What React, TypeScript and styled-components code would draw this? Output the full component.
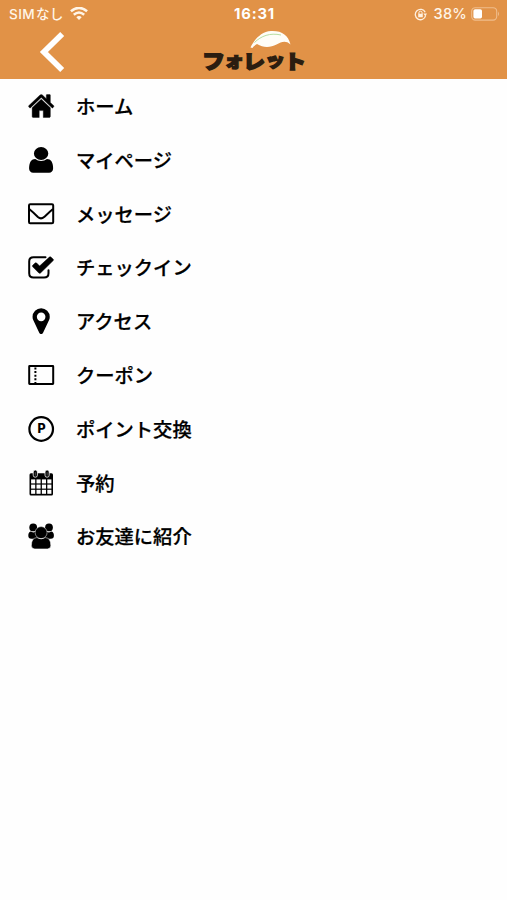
import React from "react";
import styled, { createGlobalStyle } from "styled-components";

const GlobalStyle = createGlobalStyle`
  * { box-sizing: border-box; }
  body { margin: 0; background: #fefefe; }
`;

const Screen = styled.div`
  width: 507px;
  height: 900px;
  overflow: hidden;
  display: flex;
  flex-direction: column;
  background: #fefefe;
  color: #000;
  font-family: "Noto Sans CJK JP", sans-serif;
`;

const Header = styled.header`
  height: 79px;
  flex: none;
  background: #e19247;
`;

const StatusBar = styled.div`
  height: 28px;
  padding: 0 7px 0 9px;
  display: grid;
  grid-template-columns: 1fr auto 1fr;
  align-items: center;
  color: #fff5e8;
  font-family: Inter, "Noto Sans CJK JP", sans-serif;
  font-size: 14px;
  line-height: 28px;
`;

const Carrier = styled.div`
  display: flex;
  align-items: center;
  gap: 7px;
  font-size: 13.6px;
  font-weight: 500;
  letter-spacing: 0.4px;
  white-space: nowrap;
`;

const Kana = styled.span`
  font-size: 13.6px;
  letter-spacing: 0;
  margin-left: 1px;
`;

const Clock = styled.div`
  font-weight: 700;
  font-size: 14.8px;
  letter-spacing: 0.85px;
  color: #fff;
`;

const Power = styled.div`
  display: flex;
  justify-content: flex-end;
  align-items: center;
  font-weight: 500;
  font-size: 14.6px;
`;

const Percent = styled.span`
  margin: 0 4px 0 7px;
  letter-spacing: 0.2px;
`;

const NavBar = styled.div`
  height: 51px;
  display: grid;
  grid-template-columns: 1fr auto 1fr;
  padding: 0 38px;
`;

const BackButton = styled.button`
  justify-self: start;
  width: 30px;
  height: 48px;
  padding: 0;
  border: 0;
  background: none;
`;

const Logo = styled.div`
  width: 106px;
  height: 51px;
  display: flex;
  flex-direction: column;
  align-items: center;
  color: #2b1d10;
`;

const Leaf = styled.svg`
  width: 44px;
  height: 20px;
  flex: none;
  margin: 1px 0 0 35px;
`;

const LogoText = styled.div`
  display: flex;
  height: 22px;
  align-items: center;
  line-height: 22px;
  font-weight: 900;
  transform: scaleY(0.9);
`;

const LogoKana = styled.span<{ $size: number; $width: number }>`
  width: ${(p) => p.$width}px;
  display: flex;
  justify-content: center;
  font-size: ${(p) => p.$size}px;
  -webkit-text-stroke: 1.5px #2b1d10;
`;

const Menu = styled.nav`
  display: flex;
  flex-direction: column;
  padding-top: 0.3px;
`;

const MenuRow = styled.a`
  height: 53.77px;
  display: flex;
  align-items: center;
  gap: 21px;
  padding-left: 27px;
  font-size: 19.3px;
  font-weight: 500;
  line-height: 28px;
  -webkit-text-stroke: 0.25px #000;
`;

const Icon = styled.svg`
  width: 28px;
  height: 28px;
  flex: none;
  fill: #000;
  overflow: visible;
`;

const HomeIcon = () => (
  <Icon viewBox="0 0 28 28">
    <path
      transform="translate(1.1 -2) scale(.0158 .0179)"
      stroke="#000"
      strokeWidth="22"
      d="M1408 992v480q0 26-19 45t-45 19H960v-384H704v384H320q-26 0-45-19t-19-45V992q0-1 .5-3t.5-3l575-474 575 474q1 2 1 6zm223-69l-62 74q-8 9-21 11h-3q-13 0-21-7L832 424 140 1001q-12 8-24 7-13-2-21-11l-62-74q-8-10-7-23.5t11-21.5l719-599q32-26 76-26t76 26l244 204V288q0-14 9-23t23-9h192q14 0 23 9t9 23v408l219 182q10 8 11 21.5t-7 23.5z"
    />
  </Icon>
);

const UserIcon = () => (
  <Icon viewBox="0 0 28 28">
    <path
      transform="translate(-2.7 -1.1) scale(.01875 .0168)"
      d="M1536 1399q0 109-62.500 187t-150.500 78h-854q-88 0-150.500-78t-62.500-187q0-85 8.500-160.500t31.500-152 58.500-131 94-89 134.500-34.500q131 128 313 128t313-128q76 0 134.500 34.500t94 89 58.500 131 31.500 152 8.500 160.500zm-256-887q0 159-112.500 271.500t-271.500 112.500-271.500-112.500-112.500-271.500 112.500-271.500 271.500-112.500 271.500 112.500 112.500 271.500z"
    />
  </Icon>
);

const MailIcon = () => (
  <Icon viewBox="0 0 28 28">
    <g fill="none" stroke="#000" strokeWidth="2" strokeLinejoin="round">
      <rect x="2" y="4.200" width="24.200" height="19" rx="1.200" />
      <path d="M2.200 9c3.200 2.600 6.300 5.600 8.700 8q3.100 2.800 6.200 0c2.600-2.400 5.700-5.400 8.900-8" />
    </g>
  </Icon>
);

const CheckIcon = () => (
  <Icon viewBox="0 0 28 28">
    <path
      d="M18.500 4.300H6.500Q2.200 4.300 2.200 8.400V20.200q0 4.300 4.300 4.300H17q4.500 0 4.500-4.300v-3"
      fill="none"
      stroke="#000"
      strokeWidth="2"
      strokeLinecap="round"
    />
    <path d="M5.700 12.300l2.400-2.300q.8-.6 1.500 0l3 3L22.400 4.100q.8-.7 1.500 0l2.300 2.100q.7.700 0 1.400L13.500 20q-.8.700-1.600 0L5.700 13.800q-.7-.7 0-1.500z" stroke="#000" strokeWidth=".5" />
  </Icon>
);

const PinIcon = () => (
  <Icon viewBox="0 0 28 28">
    <path
      transform="translate(-.9 -.9) scale(.0168)"
      d="M1152 640q0-106-75-181t-181-75-181 75-75 181 75 181 181 75 181-75 75-181zm256 0q0 109-33 179l-364 774q-16 33-47.500 52t-67.500 19-67.500-19-46.500-52l-365-774q-33-70-33-179 0-212 150-362t362-150 362 150 150 362z"
    />
  </Icon>
);

const CouponIcon = () => (
  <Icon viewBox="0 0 28 28">
    <g fill="none" stroke="#000" strokeWidth="2">
      <rect x="2.200" y="5" width="24" height="18" rx=".4" />
      <path d="M8.400 6.500v15.500" strokeDasharray="2 1.600" />
    </g>
  </Icon>
);

const Letter = styled.text`
  font: 800 12.5px Inter, sans-serif;
`;

const PointIcon = () => (
  <Icon viewBox="0 0 28 28">
    <circle cx="14.200" cy="14" r="11.800" fill="none" stroke="#000" strokeWidth="2.200" />
    <Letter x="14.500" y="18.400" textAnchor="middle">P</Letter>
  </Icon>
);

const CalendarIcon = () => (
  <Icon viewBox="0 0 28 28">
    <path d="M4 4.300h20.500q1.500 0 1.500 1.500V25q0 1.500-1.500 1.500H4Q2.500 26.500 2.500 25V5.800q0-1.500 1.500-1.500z" />
    <g fill="#fefefe">
      {[10.4, 15.6, 20.8].map((y) =>
        [4.1, 9.5, 14.9, 20.3].map((x) => (
          <rect key={`${x}-${y}`} x={x} y={y} width="4.100" height="4" />
        ))
      )}
    </g>
    <g stroke="#fefefe" strokeWidth=".8">
      <rect x="6.200" y="1" width="4.200" height="7.200" rx="2" />
      <rect x="18" y="1" width="4.200" height="7.200" rx="2" />
    </g>
    <path d="M8.300 3.200v3.400M20.100 3.200v3.400" stroke="#888" strokeWidth=".6" />
  </Icon>
);

const UsersIcon = () => (
  <Icon viewBox="0 0 28 28">
    <circle cx="6.200" cy="5.400" r="3.900" />
    <circle cx="22" cy="5.400" r="3.900" />
    <path d="M3.600 9.600q2.800 1.600 5.200 0l2.800 2.400v4.700H4.300q-3-.2-3-3 0-3.400 2.300-4.100zM24.600 9.600q-2.800 1.600-5.200 0l-2.800 2.400v4.700h7.300q3-.2 3-3 0-3.400-2.300-4.100z" />
    <path
      d="M9.800 15.600q4.300 2.600 8.600 0 5.400.4 5.400 8 0 3.300-3.400 3.300H7.800q-3.400 0-3.400-3.300 0-7.600 5.400-8z"
      stroke="#fefefe"
      strokeWidth=".5"
    />
    <circle cx="14.100" cy="10.600" r="6" stroke="#fefefe" strokeWidth=".5" />
  </Icon>
);

const items = [
  { label: "ホーム", Glyph: HomeIcon },
  { label: "マイページ", Glyph: UserIcon },
  { label: "メッセージ", Glyph: MailIcon },
  { label: "チェックイン", Glyph: CheckIcon },
  { label: "アクセス", Glyph: PinIcon },
  { label: "クーポン", Glyph: CouponIcon },
  { label: "ポイント交換", Glyph: PointIcon },
  { label: "予約", Glyph: CalendarIcon },
  { label: "お友達に紹介", Glyph: UsersIcon },
];

const logoKana = [
  { char: "フ", size: 23, width: 23 },
  { char: "ォ", size: 20, width: 18 },
  { char: "レ", size: 22, width: 22 },
  { char: "ッ", size: 20, width: 20 },
  { char: "ト", size: 22, width: 20 },
];

export default function App() {
  return (
    <Screen>
      <GlobalStyle />
      <Header>
        <StatusBar>
          <Carrier>
            <span>
              SIM<Kana>なし</Kana>
            </span>
            <svg width="18" height="14" viewBox="0 0 18 14">
              <g fill="none" stroke="#fff5e8" strokeWidth="2.500">
                <path d="M.9 4.300q8.100-6.800 16.200 0" />
                <path d="M3.800 7.700q5.200-4.400 10.400 0" />
              </g>
              <path d="M6.300 10.200q2.700-2.300 5.400 0L9 12.900z" fill="#fff5e8" />
            </svg>
          </Carrier>
          <Clock>16:31</Clock>
          <Power>
            <svg width="13" height="13" viewBox="0 0 13 13">
              <path
                d="M11.600 7.500A5.200 5.200 0 1 1 11.200 4.300"
                fill="none"
                stroke="#fff0df"
                strokeWidth="1.300"
              />
              <path d="M9.300 5.400h3.700l-1.600 2.900z" fill="#fff0df" />
              <path d="M4.900 6V4.800a1.600 1.600 0 0 1 3.200 0V6" fill="none" stroke="#fff0df" />
              <rect x="4.200" y="5.800" width="4.600" height="3.500" rx=".6" fill="#fff0df" />
            </svg>
            <Percent>38%</Percent>
            <svg width="29" height="14" viewBox="0 0 29 14">
              <rect x=".7" y=".7" width="25" height="12.400" rx="3.600" fill="none" stroke="#efbd8c" strokeWidth="1.100" />
              <rect x="2.400" y="2.300" width="8.600" height="9.200" rx="1.700" fill="#fff" />
              <path d="M27 4.500q2 2.400 0 4.800z" fill="#efbd8c" />
            </svg>
          </Power>
        </StatusBar>
        <NavBar>
          <BackButton aria-label="戻る">
            <svg width="30" height="48" viewBox="0 0 30 48">
              <path d="M24.200 6L5.900 24l18.300 18" fill="none" stroke="#fff" strokeWidth="5.700" />
            </svg>
          </BackButton>
          <Logo>
            <Leaf viewBox="0 0 44 20">
              <path d="M1.500 18.500C5 11 12 2.500 22 2c11-.5 17 4 19.500 13.500-5-4.500-9-2.500-14 0-6 3-13 3.500-19.500-.5-2 1.500-3.500 2-4.500 4z" fill="#fffdf7" />
              <path d="M5.500 13.500C12 7 21 3.500 32 6" fill="none" stroke="#b7dda1" strokeWidth="1" />
            </Leaf>
            <LogoText>
              {logoKana.map((k) => (
                <LogoKana key={k.char} $size={k.size} $width={k.width}>
                  {k.char}
                </LogoKana>
              ))}
            </LogoText>
          </Logo>
          <span />
        </NavBar>
      </Header>
      <Menu>
        {items.map(({ label, Glyph }) => (
          <MenuRow key={label}>
            <Glyph />
            <span>{label}</span>
          </MenuRow>
        ))}
      </Menu>
    </Screen>
  );
}
